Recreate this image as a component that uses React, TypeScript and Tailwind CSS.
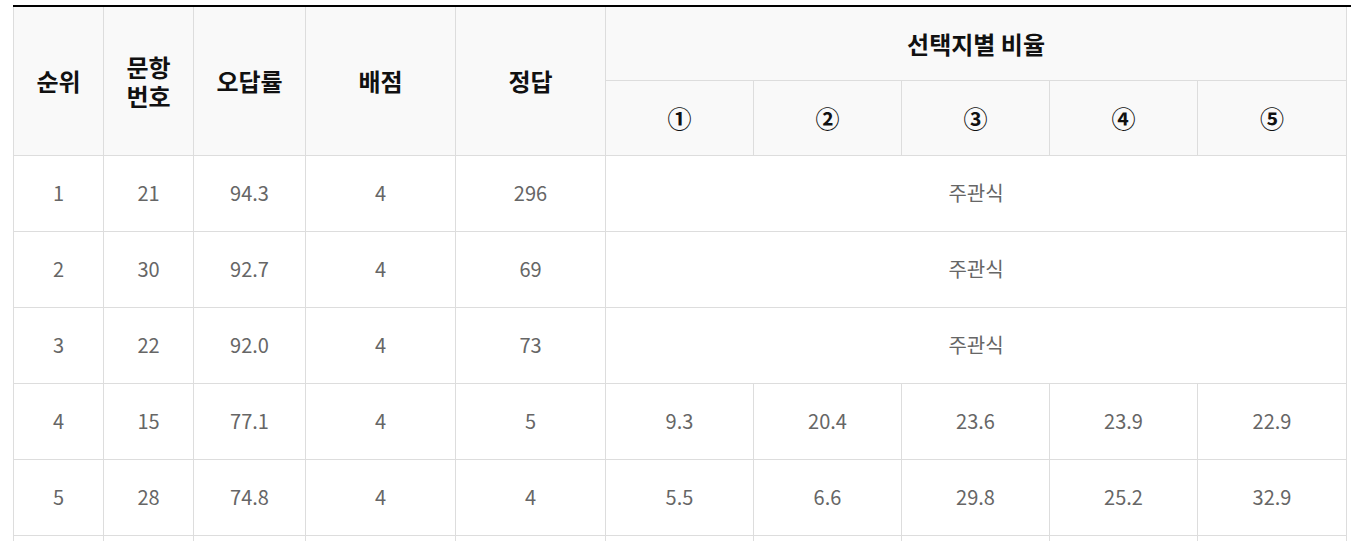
const rows: { rank: string; no: string; rate: string; score: string; answer: string; ratios: string[] | null }[] = [
  { rank: "1", no: "21", rate: "94.3", score: "4", answer: "296", ratios: null },
  { rank: "2", no: "30", rate: "92.7", score: "4", answer: "69", ratios: null },
  { rank: "3", no: "22", rate: "92.0", score: "4", answer: "73", ratios: null },
  { rank: "4", no: "15", rate: "77.1", score: "4", answer: "5", ratios: ["9.3", "20.4", "23.6", "23.9", "22.9"] },
  { rank: "5", no: "28", rate: "74.8", score: "4", answer: "4", ratios: ["5.5", "6.6", "29.8", "25.2", "32.9"] },
  { rank: "6", no: "29", rate: "70.2", score: "4", answer: "1", ratios: ["29.8", "12.1", "18.4", "20.6", "18.9"] },
];

const th = "border border-[#dddddd] bg-[#f9f9f9] text-center align-middle font-bold text-[24px] leading-[29px] text-[#111111]";
const td = "border border-[#dddddd] h-[76px] text-center align-middle text-[20px] text-[#666666]";

export default function App() {
  return (
    <div className="w-[1351px] h-[541px] overflow-hidden bg-white pt-[5px] pl-[13px]" style={{ fontFamily: '"Noto Sans CJK KR", "Noto Sans", sans-serif' }}>
      <div className="w-[1400px] border-t-2 border-black">
        <table className="table-fixed border-collapse w-[1333px]">
          <colgroup>
            <col className="w-[90px]" />
            <col className="w-[90px]" />
            <col className="w-[112px]" />
            <col className="w-[150px]" />
            <col className="w-[150px]" />
            <col className="w-[148px]" />
            <col className="w-[148px]" />
            <col className="w-[148px]" />
            <col className="w-[148px]" />
            <col className="w-[149px]" />
          </colgroup>
          <thead>
            <tr className="h-[73px]">
              <th rowSpan={2} className={`${th} border-t-0`}>순위</th>
              <th rowSpan={2} className={`${th} border-t-0`}>문항<br />번호</th>
              <th rowSpan={2} className={`${th} border-t-0`}>오답률</th>
              <th rowSpan={2} className={`${th} border-t-0`}>배점</th>
              <th rowSpan={2} className={`${th} border-t-0`}>정답</th>
              <th colSpan={5} className={`${th} border-t-0`}>선택지별 비율</th>
            </tr>
            <tr className="h-[75px]">
              {["①", "②", "③", "④", "⑤"].map((c) => (
                <th key={c} className={th}>{c}</th>
              ))}
            </tr>
          </thead>
          <tbody>
            {rows.map((r) => (
              <tr key={r.rank}>
                <td className={td}>{r.rank}</td>
                <td className={td}>{r.no}</td>
                <td className={td}>{r.rate}</td>
                <td className={td}>{r.score}</td>
                <td className={td}>{r.answer}</td>
                {r.ratios ? (
                  r.ratios.map((v, i) => (
                    <td key={i} className={td}>{v}</td>
                  ))
                ) : (
                  <td colSpan={5} className={td}>주관식</td>
                )}
              </tr>
            ))}
          </tbody>
        </table>
      </div>
    </div>
  );
}
